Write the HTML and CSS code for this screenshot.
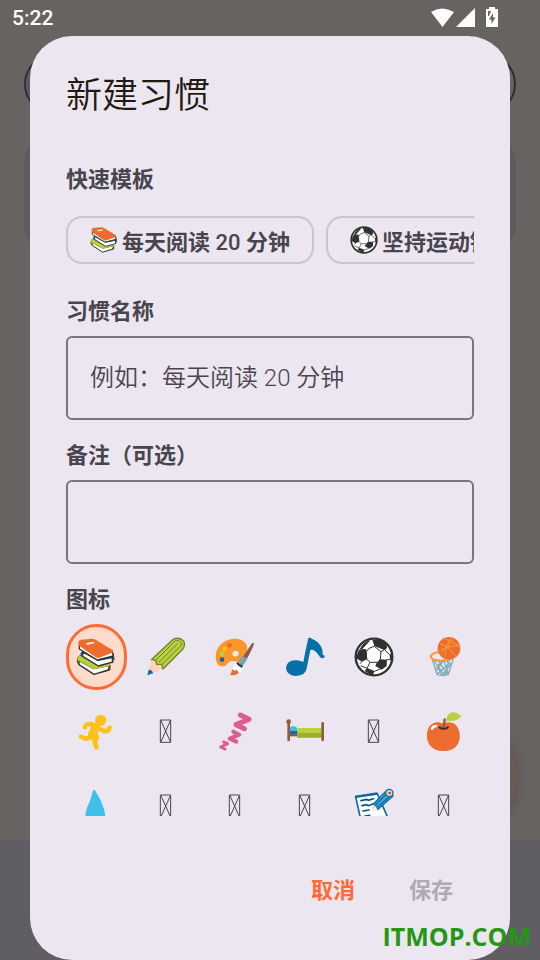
FILE: index.html
```html
<!DOCTYPE html>
<html lang="zh-CN">
<head>
<meta charset="utf-8">
<meta name="viewport" content="width=device-width, initial-scale=1">
<title>新建习惯</title>
<link rel="stylesheet" href="styles.css">
</head>
<body>
<svg class="sprite" aria-hidden="true">
  <symbol id="books" viewBox="0 0 120 120">
    <path d="M14 55L6 60Q1 70 6 80L53 111L102 99V84L60 80Z" fill="#b4cf35" stroke="#3b3d35" stroke-width="3" stroke-linejoin="round"/>
    <path d="M9 71L54 95L101 85L97 99L54 112L9 83Z" fill="#fff" stroke="#333" stroke-width="4" stroke-linejoin="round"/>
    <path d="M4 62L8 56L58 84L101 80V87L54 97L5 70Z" fill="#b4cf35"/>
    <path d="M18 42L12 52L66 87L116 69L113 48L70 55Z" fill="#0b6fa6"/>
    <path d="M20 45L66 70L112 61Q106 68 111 75L67 87L20 58Z" fill="#fff" stroke="#333" stroke-width="4" stroke-linejoin="round"/>
    <path d="M10 22L64 55L108 41L112 57L64 69L10 36Z" fill="#fff" stroke="#333" stroke-width="4" stroke-linejoin="round"/>
    <path d="M7 14Q8 9 17 8L48 5Q54 5 60 9L108 38Q116 44 107 48L70 62Q64 64 58 60L10 27Q6 22 7 14Z" fill="#ed6c30"/>
    <path d="M31 18L50 15Q57 15 56 18L36 23Q30 23 31 18Z" fill="#fff"/>
  </symbol>
  <symbol id="pencil" viewBox="0 0 120 120">
    <path d="M15 69L4 115L50 97L43 78Z" fill="#ffd3b6"/>
    <path d="M8 98L4 115L21 109Q20 99 8 98Z" fill="#0d6ca5"/>
    <path d="M16 68L80 8Q98-2 113 12Q119 24 110 37L51 96L47 82L32 82L29 70Z" fill="#b9d03f" stroke="#6f8330" stroke-width="4" stroke-linejoin="round"/>
    <path d="M29 70L88 11Q103 8 108 23L47 83M39 75L95 20" fill="none" stroke="#6f8330" stroke-width="3"/>
  </symbol>
  <symbol id="palette" viewBox="0 0 120 120">
    <path fill-rule="evenodd" d="M51 6C22 9 2 32 2 59C2 77 11 89 25 88C39 86 36 73 51 72C64 71 67 78 76 71C89 61 100 44 96 27C91 11 73 3 51 6ZM60 41C70 40 75 50 68 56C59 62 49 55 53 47C54 43 56 42 60 41Z" fill="#f9972b"/>
    <circle cx="44" cy="25" r="7" fill="#ed6c30"/><circle cx="29" cy="36" r="7" fill="#fcc21b"/><circle cx="21" cy="51" r="7" fill="#b9d03f"/><circle cx="21" cy="68" r="7" fill="#0b6ca5"/>
    <path d="M110 20Q114 15 117 20Q115 29 96 65L84 59Z" fill="#855c52"/>
    <path d="M83 57L97 65L81 91L66 80Z" fill="#78a2ad"/>
    <path d="M68 75Q72 83 83 86L80 94Q67 88 64 80Z" fill="#333"/>
    <path d="M64 80Q72 89 81 93Q82 107 72 112Q54 116 45 113Q51 108 51 98Q56 83 64 80Z" fill="#fff"/>
    <path d="M51 96L59 101L65 98L72 108Q60 118 45 113Q51 107 51 96Z" fill="#ed6c30"/>
  </symbol>
  <symbol id="note" viewBox="0 0 120 120">
    <path d="M70 3Q74 0 82 6Q107 17 112 38L113 53Q120 54 119 59Q118 64 110 64Q104 60 100 53Q87 35 76 39L66 90Q63 116 32 117Q3 115 3 91Q6 71 30 70Q42 68 55 75Q61 42 70 3Z" fill="#0670a7"/>
  </symbol>
  <symbol id="soccer" viewBox="0 0 120 120">
    <circle cx="60" cy="60" r="55" fill="#fff" stroke="#303231" stroke-width="7"/>
    <path d="M55 8L84 9Q100 19 99 33L92 40L61 27ZM14 40L36 37L40 66L24 74L5 63ZM78 67L99 68L98 87L83 98L64 87ZM32 102L39 93L62 102L55 117ZM107 53L115 49V70L108 69ZM23 27Q33 13 49 10L44 16L24 37L15 40Z" fill="#303231"/>
    <path d="M61 28L45 34L37 44V66L49 76L70 76L79 68L81 44L91 38M81 44L61 28M37 40L22 36M24 73L18 80M48 76L39 94L20 86M70 76L66 86M62 103L79 96M98 68L110 68M92 39L108 54" fill="none" stroke="#303231" stroke-width="3"/>
  </symbol>
  <symbol id="basket" viewBox="0 0 120 120">
    <g fill="none" stroke="#80afb9" stroke-width="4"><path d="M25 68L39 112L55 116L73 112L88 65M30 72L62 115L77 70M87 74L54 115L31 70M35 104L59 70L73 110M82 84L60 68L35 92M39 112L76 78M71 111L42 70"/></g>
    <path d="M57 45Q22 45 20 59Q24 72 56 71Q80 70 88 60" fill="none" stroke="#f9972b" stroke-width="6"/>
    <circle cx="75" cy="34" r="34" fill="#ed6c30"/>
    <path d="M47 21Q77 27 95 59M58 4Q82 9 108 30M43 45Q59 26 107 27M50 54Q66 33 82 1M63 64Q61 29 92 4" fill="none" stroke="#fa9b30" stroke-width="3"/>
  </symbol>
  <symbol id="runner" viewBox="0 0 120 120">
    <circle cx="74" cy="25" r="17" fill="#fcc21b"/>
    <g fill="none" stroke="#fcc21b" stroke-linecap="round" stroke-linejoin="round"><path d="M57 41L45 36Q28 36 27 46M67 49L84 57Q96 60 101 47M47 70Q34 87 15 74" stroke-width="14"/><path d="M58 47L49 67L57 76" stroke-width="26"/><path d="M58 73L56 87L61 105" stroke-width="15"/></g>
  </symbol>
  <symbol id="zzz" viewBox="0 0 120 120">
    <g fill="none" stroke="#dc5c94" stroke-linecap="round" stroke-linejoin="round"><path d="M76 9L102 22L63 38L88 50" stroke-width="15"/><path d="M55 59L73 68L44 80L64 89" stroke-width="12"/><path d="M26 90L38 95L17 105L30 111" stroke-width="9"/></g>
  </symbol>
  <symbol id="bed" viewBox="0 0 120 120">
    <path d="M12 59H39V73H12Z" fill="#855c3f"/><path d="M13 57H38V65H13Z" fill="#0b6ca5"/>
    <path d="M13 57V47Q24 37 36 47V57Z" fill="#40c0e7"/>
    <path d="M37 48H112V77H37Z" fill="#b9d03f"/><path d="M37 63H110V77H37Z" fill="#9dad32"/>
    <path d="M11 29V84M113 34V84" stroke="#8d5c3e" stroke-width="8" stroke-linecap="round"/><circle cx="11" cy="29" r="7" fill="#8d5c3e"/>
  </symbol>
  <symbol id="apple" viewBox="0 0 120 120">
    <path d="M58 35C34 23 12 35 9 65C5 99 30 118 60 117C89 118 110 99 107 66C105 38 82 23 58 35Z" fill="#ed6c30"/>
    <path d="M46 46Q59 55 72 46" fill="none" stroke="#383226" stroke-width="6" stroke-linecap="round"/>
    <path d="M59 45L62 22" stroke="#855c52" stroke-width="7" stroke-linecap="round"/>
    <path d="M66 26Q69 5 85 0Q97 1 112 11Q99 32 66 26Z" fill="#b9d03f"/>
    <path d="M24 50Q28 42 36 42" fill="none" stroke="#fff" stroke-width="8" stroke-linecap="round"/>
  </symbol>
  <symbol id="drop" viewBox="0 0 120 120">
    <path d="M51 11Q54 6 58 11Q76 39 84 66Q88 78 87 90Q83 117 58 118Q31 117 28 90Q28 76 33 62Q44 40 51 11Z" fill="#40c0e7"/>
  </symbol>
  <symbol id="memo" viewBox="0 0 120 120">
    <path d="M5 29L70 20L106 103L112 117L24 118L19 92Z" fill="#fff" stroke="#0b6ca5" stroke-width="5"/>
    <path d="M4 26L69 16L71 23L6 33Z" fill="#0b6ca5"/>
    <path d="M21 41L38 37L43 40L58 35M24 56L37 53L43 56L57 51M27 72L45 69M31 88L47 85" stroke="#0b4f80" stroke-width="5" fill="none" stroke-linecap="round"/>
    <path d="M55 73L57 53L71 68ZM55 72L77 63L69 51Z" fill="#ffd1ac"/>
    <path d="M58 51L98 10L117 27L72 67Q69 57 58 51Z" fill="#3fafd5" stroke="#0b6ca5" stroke-width="4"/>
    <path d="M65 53L98 20M71 60L107 28" stroke="#0b6ca5" stroke-width="4"/>
    <circle cx="106" cy="18" r="11" fill="#ffd1ac" stroke="#0b6ca5" stroke-width="4"/><circle cx="107" cy="18" r="4" fill="#8a5a48"/>
  </symbol>
  <symbol id="blank" viewBox="0 0 120 120">
    <path d="M43 24H74V91H43ZM44 24L74 91M74 24L44 91" fill="none" stroke="#49454f" stroke-width="3"/>
  </symbol>
</svg>

<div class="screen">
  <div class="app" aria-hidden="true">
    <div class="app-body">
      <div class="segment"><div class="segment-on"></div></div>
      <div class="app-card"></div>
      <div class="fab"></div>
    </div>
    <div class="app-nav"></div>
  </div>

  <div class="overlay">
    <header class="status">
      <span>5:22</span>
      <svg class="status-icons" viewBox="0 0 68 22" aria-hidden="true">
        <path fill="#fff" d="M1 5Q12-2 24 5L12.500 20ZM45 1V20H26ZM56 2H59V0H65V2H68V20H56Z"/>
        <path fill="#676361" d="M63 6L59 12.500H61.500V17L65.500 10.500H63ZM58 4H61L59 9H58Z"/>
      </svg>
    </header>

    <form class="dialog" role="dialog" aria-labelledby="title">
      <h1 id="title">新建习惯</h1>
      <div class="content">
        <section class="templates">
          <h2 class="label">快速模板</h2>
          <div class="chips">
            <button type="button" class="chip"><svg><use href="#books"/></svg><span>每天阅读 <span class="number">20</span> 分钟</span></button>
            <button type="button" class="chip"><svg><use href="#soccer"/></svg><span>坚持运动锻炼</span></button>
          </div>
        </section>
        <div class="field">
          <label class="label" for="name">习惯名称</label>
          <input id="name" type="text" placeholder="例如：每天阅读 20 分钟">
        </div>
        <div class="field">
          <label class="label" for="memo-text">备注（可选）</label>
          <input id="memo-text" type="text">
        </div>
        <section class="field">
          <h2 class="label">图标</h2>
          <div class="icons">
            <button type="button" class="icon selected" aria-label="书"><svg><use href="#books"/></svg></button>
            <button type="button" class="icon" aria-label="铅笔"><svg><use href="#pencil"/></svg></button>
            <button type="button" class="icon" aria-label="调色板"><svg><use href="#palette"/></svg></button>
            <button type="button" class="icon" aria-label="音符"><svg><use href="#note"/></svg></button>
            <button type="button" class="icon" aria-label="足球"><svg><use href="#soccer"/></svg></button>
            <button type="button" class="icon" aria-label="篮球"><svg><use href="#basket"/></svg></button>
            <button type="button" class="icon" aria-label="跑步"><svg><use href="#runner"/></svg></button>
            <button type="button" class="icon" aria-label="图标 8"><svg><use href="#blank"/></svg></button>
            <button type="button" class="icon" aria-label="睡眠"><svg><use href="#zzz"/></svg></button>
            <button type="button" class="icon" aria-label="床"><svg><use href="#bed"/></svg></button>
            <button type="button" class="icon" aria-label="图标 11"><svg><use href="#blank"/></svg></button>
            <button type="button" class="icon" aria-label="水果"><svg><use href="#apple"/></svg></button>
            <button type="button" class="icon" aria-label="水滴"><svg><use href="#drop"/></svg></button>
            <button type="button" class="icon" aria-label="图标 14"><svg><use href="#blank"/></svg></button>
            <button type="button" class="icon" aria-label="图标 15"><svg><use href="#blank"/></svg></button>
            <button type="button" class="icon" aria-label="图标 16"><svg><use href="#blank"/></svg></button>
            <button type="button" class="icon" aria-label="笔记"><svg><use href="#memo"/></svg></button>
            <button type="button" class="icon" aria-label="图标 18"><svg><use href="#blank"/></svg></button>
          </div>
        </section>
      </div>
      <footer class="actions">
        <button type="button" class="action">取消</button>
        <button type="submit" class="action" disabled>保存</button>
      </footer>
    </form>
  </div>
  <div class="watermark">ITMOP.COM</div>
</div>
</body>
</html>
```
FILE: styles.css
```css
* {
  box-sizing: border-box;
}

body {
  margin: 0;
  background: #676361;
  color: #49454f;
  font-family: Roboto, "Noto Sans CJK SC", sans-serif;
}

h1,
h2 {
  margin: 0;
}

button,
input {
  font: inherit;
  color: inherit;
  background: none;
  border: 0;
  margin: 0;
  padding: 0;
}

.sprite {
  display: none;
}

.screen {
  position: relative;
  display: grid;
  height: 100vh;
  overflow: hidden;
}

.app,
.overlay {
  grid-area: 1 / 1;
  min-width: 0;
  min-height: 0;
  display: flex;
  flex-direction: column;
}

/* Dimmed page behind the dialog */
.app-body {
  flex: 1;
  display: flex;
  flex-direction: column;
  padding: 54px 24px 24px;
}

.segment {
  display: flex;
  height: 60px;
  border: 2px solid #302e33;
  border-radius: 30px;
  overflow: hidden;
}

.segment-on {
  width: 50%;
  background: #5c5764;
}

.app-card {
  height: 112px;
  margin-top: 24px;
  border-radius: 24px;
  background: #5c5b5f;
}

.fab {
  width: 84px;
  height: 84px;
  margin-top: auto;
  align-self: flex-end;
  border-radius: 30px;
  background: #6b5a52;
  box-shadow: 0 4px 12px #00000030;
}

.app-nav {
  height: 120px;
  background: #615e63;
}

/* Status bar */
.status {
  display: flex;
  align-items: center;
  justify-content: space-between;
  height: 36px;
  padding: 0 42px 0 12px;
  color: #fff;
  font-size: 21px;
  font-weight: 500;
}

.status-icons {
  width: 68px;
  height: 22px;
}

/* Dialog */
.dialog {
  flex: 1;
  min-height: 0;
  display: flex;
  flex-direction: column;
  margin: 0 30px;
  padding: 36px;
  border-radius: 42px;
  background: #ece6f0;
}

h1 {
  color: #1f1b13;
  font-size: 36px;
  line-height: 48px;
  font-weight: 350;
  margin-bottom: 48px;
}

.content {
  flex: 1;
  min-height: 0;
  overflow: hidden;
  display: flex;
  flex-direction: column;
  gap: 24px;
}

.label {
  display: block;
  font-size: 22px;
  line-height: 24px;
  font-weight: 700;
}

.templates {
  flex: none;
  display: grid;
  gap: 24px;
  padding-bottom: 12px;
}

.chips {
  display: flex;
  gap: 12px;
  min-width: 0;
  overflow-x: auto;
  scrollbar-width: none;
}

.chip {
  flex: none;
  display: flex;
  align-items: center;
  gap: 4px;
  height: 48px;
  padding: 0 22px;
  border: 2px solid #cac4d0;
  border-radius: 16px;
  font-size: 22px;
  font-weight: 700;
  white-space: nowrap;
}

.number {
  font-weight: 500;
}

.chip svg {
  width: 28px;
  height: 28px;
}

.field {
  flex: none;
  display: grid;
  gap: 12px;
}

.field input {
  width: 100%;
  height: 84px;
  padding: 0 22px;
  border: 2px solid #79747e;
  border-radius: 6px;
  font-size: 24px;
  font-weight: 350;
}

.field input::placeholder {
  color: #49454f;
  opacity: 1;
}

.icons {
  display: grid;
  grid-template-columns: repeat(6, 1fr);
  gap: 9px;
}

.icon {
  display: grid;
  place-items: center;
  height: 66px;
  border-radius: 33px;
}

.icon svg {
  width: 40px;
  height: 40px;
}

.icon.selected {
  border: 3px solid #ff6b35;
  background: #ffdbcc;
}

.actions {
  display: flex;
  justify-content: flex-end;
  gap: 12px;
  padding: 48px 0 12px;
}

.action {
  height: 48px;
  padding: 0 21px;
  color: #ff6b35;
  font-size: 22px;
  font-weight: 700;
}

.action:disabled {
  color: #afa9b4;
}

.watermark {
  position: absolute;
  right: 9px;
  bottom: 6px;
  color: #259714;
  font-family: "Open Sans", "Noto Sans", sans-serif;
  font-size: 25px;
  line-height: 36px;
  font-weight: 700;
}
```
